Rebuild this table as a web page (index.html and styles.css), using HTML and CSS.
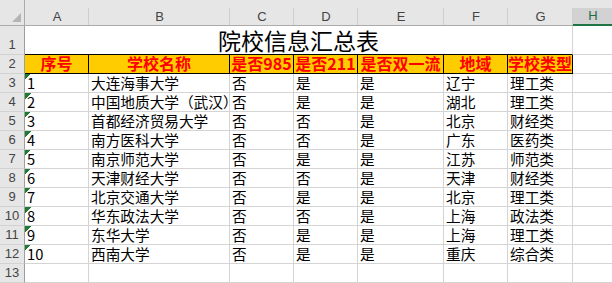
FILE: index.html
```html
<!DOCTYPE html>
<html lang="zh-CN">
<head>
<meta charset="utf-8">
<title>院校信息汇总表</title>
<link rel="stylesheet" href="styles.css">
</head>
<body>
<div class="sheet">
  <div class="corner"><svg width="25" height="26" viewBox="0 0 25 26"><polygon points="21,13 21,22 12,22" fill="#b4b4b4"/></svg></div>
  <div class="colhead">A</div>
  <div class="colhead">B</div>
  <div class="colhead">C</div>
  <div class="colhead">D</div>
  <div class="colhead">E</div>
  <div class="colhead">F</div>
  <div class="colhead">G</div>
  <div class="colhead sel">H</div>

  <div class="rowhead">1</div>
  <div class="title">院校信息汇总表</div>
  <div class="cell"></div>

  <div class="rowhead">2</div>
  <div class="hd">序号</div>
  <div class="hd">学校名称</div>
  <div class="hd">是否985</div>
  <div class="hd">是否211</div>
  <div class="hd">是否双一流</div>
  <div class="hd">地域</div>
  <div class="hd">学校类型</div>
  <div class="cell"></div>

  <div class="rowhead">3</div>
  <div class="cell txt">1</div><div class="cell">大连海事大学</div><div class="cell">否</div><div class="cell">是</div><div class="cell">是</div><div class="cell">辽宁</div><div class="cell">理工类</div><div class="cell"></div>

  <div class="rowhead">4</div>
  <div class="cell txt">2</div><div class="cell">中国地质大学（武汉）</div><div class="cell">否</div><div class="cell">是</div><div class="cell">是</div><div class="cell">湖北</div><div class="cell">理工类</div><div class="cell"></div>

  <div class="rowhead">5</div>
  <div class="cell txt">3</div><div class="cell">首都经济贸易大学</div><div class="cell">否</div><div class="cell">否</div><div class="cell">是</div><div class="cell">北京</div><div class="cell">财经类</div><div class="cell"></div>

  <div class="rowhead">6</div>
  <div class="cell txt">4</div><div class="cell">南方医科大学</div><div class="cell">否</div><div class="cell">否</div><div class="cell">是</div><div class="cell">广东</div><div class="cell">医药类</div><div class="cell"></div>

  <div class="rowhead">7</div>
  <div class="cell txt">5</div><div class="cell">南京师范大学</div><div class="cell">否</div><div class="cell">是</div><div class="cell">是</div><div class="cell">江苏</div><div class="cell">师范类</div><div class="cell"></div>

  <div class="rowhead">8</div>
  <div class="cell txt">6</div><div class="cell">天津财经大学</div><div class="cell">否</div><div class="cell">否</div><div class="cell">是</div><div class="cell">天津</div><div class="cell">财经类</div><div class="cell"></div>

  <div class="rowhead">9</div>
  <div class="cell txt">7</div><div class="cell">北京交通大学</div><div class="cell">否</div><div class="cell">是</div><div class="cell">是</div><div class="cell">北京</div><div class="cell">理工类</div><div class="cell"></div>

  <div class="rowhead">10</div>
  <div class="cell txt">8</div><div class="cell">华东政法大学</div><div class="cell">否</div><div class="cell">否</div><div class="cell">是</div><div class="cell">上海</div><div class="cell">政法类</div><div class="cell"></div>

  <div class="rowhead">11</div>
  <div class="cell txt">9</div><div class="cell">东华大学</div><div class="cell">否</div><div class="cell">是</div><div class="cell">是</div><div class="cell">上海</div><div class="cell">理工类</div><div class="cell"></div>

  <div class="rowhead">12</div>
  <div class="cell txt">10</div><div class="cell">西南大学</div><div class="cell">否</div><div class="cell">是</div><div class="cell">是</div><div class="cell">重庆</div><div class="cell">综合类</div><div class="cell"></div>

  <div class="rowhead">13</div>
  <div class="cell"></div><div class="cell"></div><div class="cell"></div><div class="cell"></div><div class="cell"></div><div class="cell"></div><div class="cell"></div><div class="cell"></div>
</div>
</body>
</html>
```

FILE: styles.css
```css
html, body {
  margin: 0;
  padding: 0;
  background: #ffffff;
  overflow: hidden;
}

.sheet {
  display: grid;
  grid-template-columns: 25px 64px 141px 64px 64px 86px 64px 65px 40px;
  grid-template-rows: 26px 29px repeat(12, 19px);
  font-family: "Noto Sans CJK SC", sans-serif;
  color: #000;
  text-spacing-trim: space-all;
}

.sheet > div {
  box-sizing: border-box;
  overflow: hidden;
  white-space: nowrap;
}

.corner {
  background: #e6e6e6;
  border-right: 1px solid #ababab;
  border-bottom: 1px solid #ababab;
}

.corner svg {
  display: block;
}

.colhead {
  display: flex;
  align-items: center;
  justify-content: center;
  padding-top: 8px;
  font-family: "Liberation Sans", Arial, sans-serif;
  font-size: 13px;
  color: #444;
  background: linear-gradient(#cfcfcf, #cfcfcf) right bottom / 1px 17px no-repeat, #e6e6e6;
  border-bottom: 1px solid #ababab;
}

.colhead.sel {
  color: #1f6b45;
  background: linear-gradient(#d2d2d2, #d2d2d2) left bottom / 100% 16px no-repeat, #e6e6e6;
  border-bottom: 2px solid #217346;
  padding-top: 7px;
}

.rowhead {
  display: flex;
  align-items: flex-end;
  justify-content: center;
  padding-bottom: 1px;
  font-family: "Liberation Sans", Arial, sans-serif;
  font-size: 13px;
  line-height: 16px;
  color: #444;
  background: #e6e6e6;
  border-right: 1px solid #9e9e9e;
  border-bottom: 1px solid #d2d2d2;
}

.title {
  grid-column: span 7;
  display: flex;
  justify-content: center;
  align-items: flex-start;
  font-size: 23px;
  line-height: 28px;
  border-right: 1px solid #d4d4d4;
  border-bottom: 1px solid #000;
}

.hd {
  background: #ffcc00;
  color: #ff0000;
  font-weight: bold;
  font-size: 16px;
  line-height: 17px;
  text-align: center;
  border-right: 1px solid #000;
  border-bottom: 1px solid #000;
}

.cell {
  font-size: 14.67px;
  line-height: 17px;
  padding: 0 0 0 2px;
  border-right: 1px solid #d4d4d4;
  border-bottom: 1px solid #d4d4d4;
  font-feature-settings: "fwid" 1;
}

.cell.txt {
  background: linear-gradient(135deg, #1e7b34 50%, transparent 50%) 0 0 / 6px 6px no-repeat;
  font-feature-settings: normal;
}
```
